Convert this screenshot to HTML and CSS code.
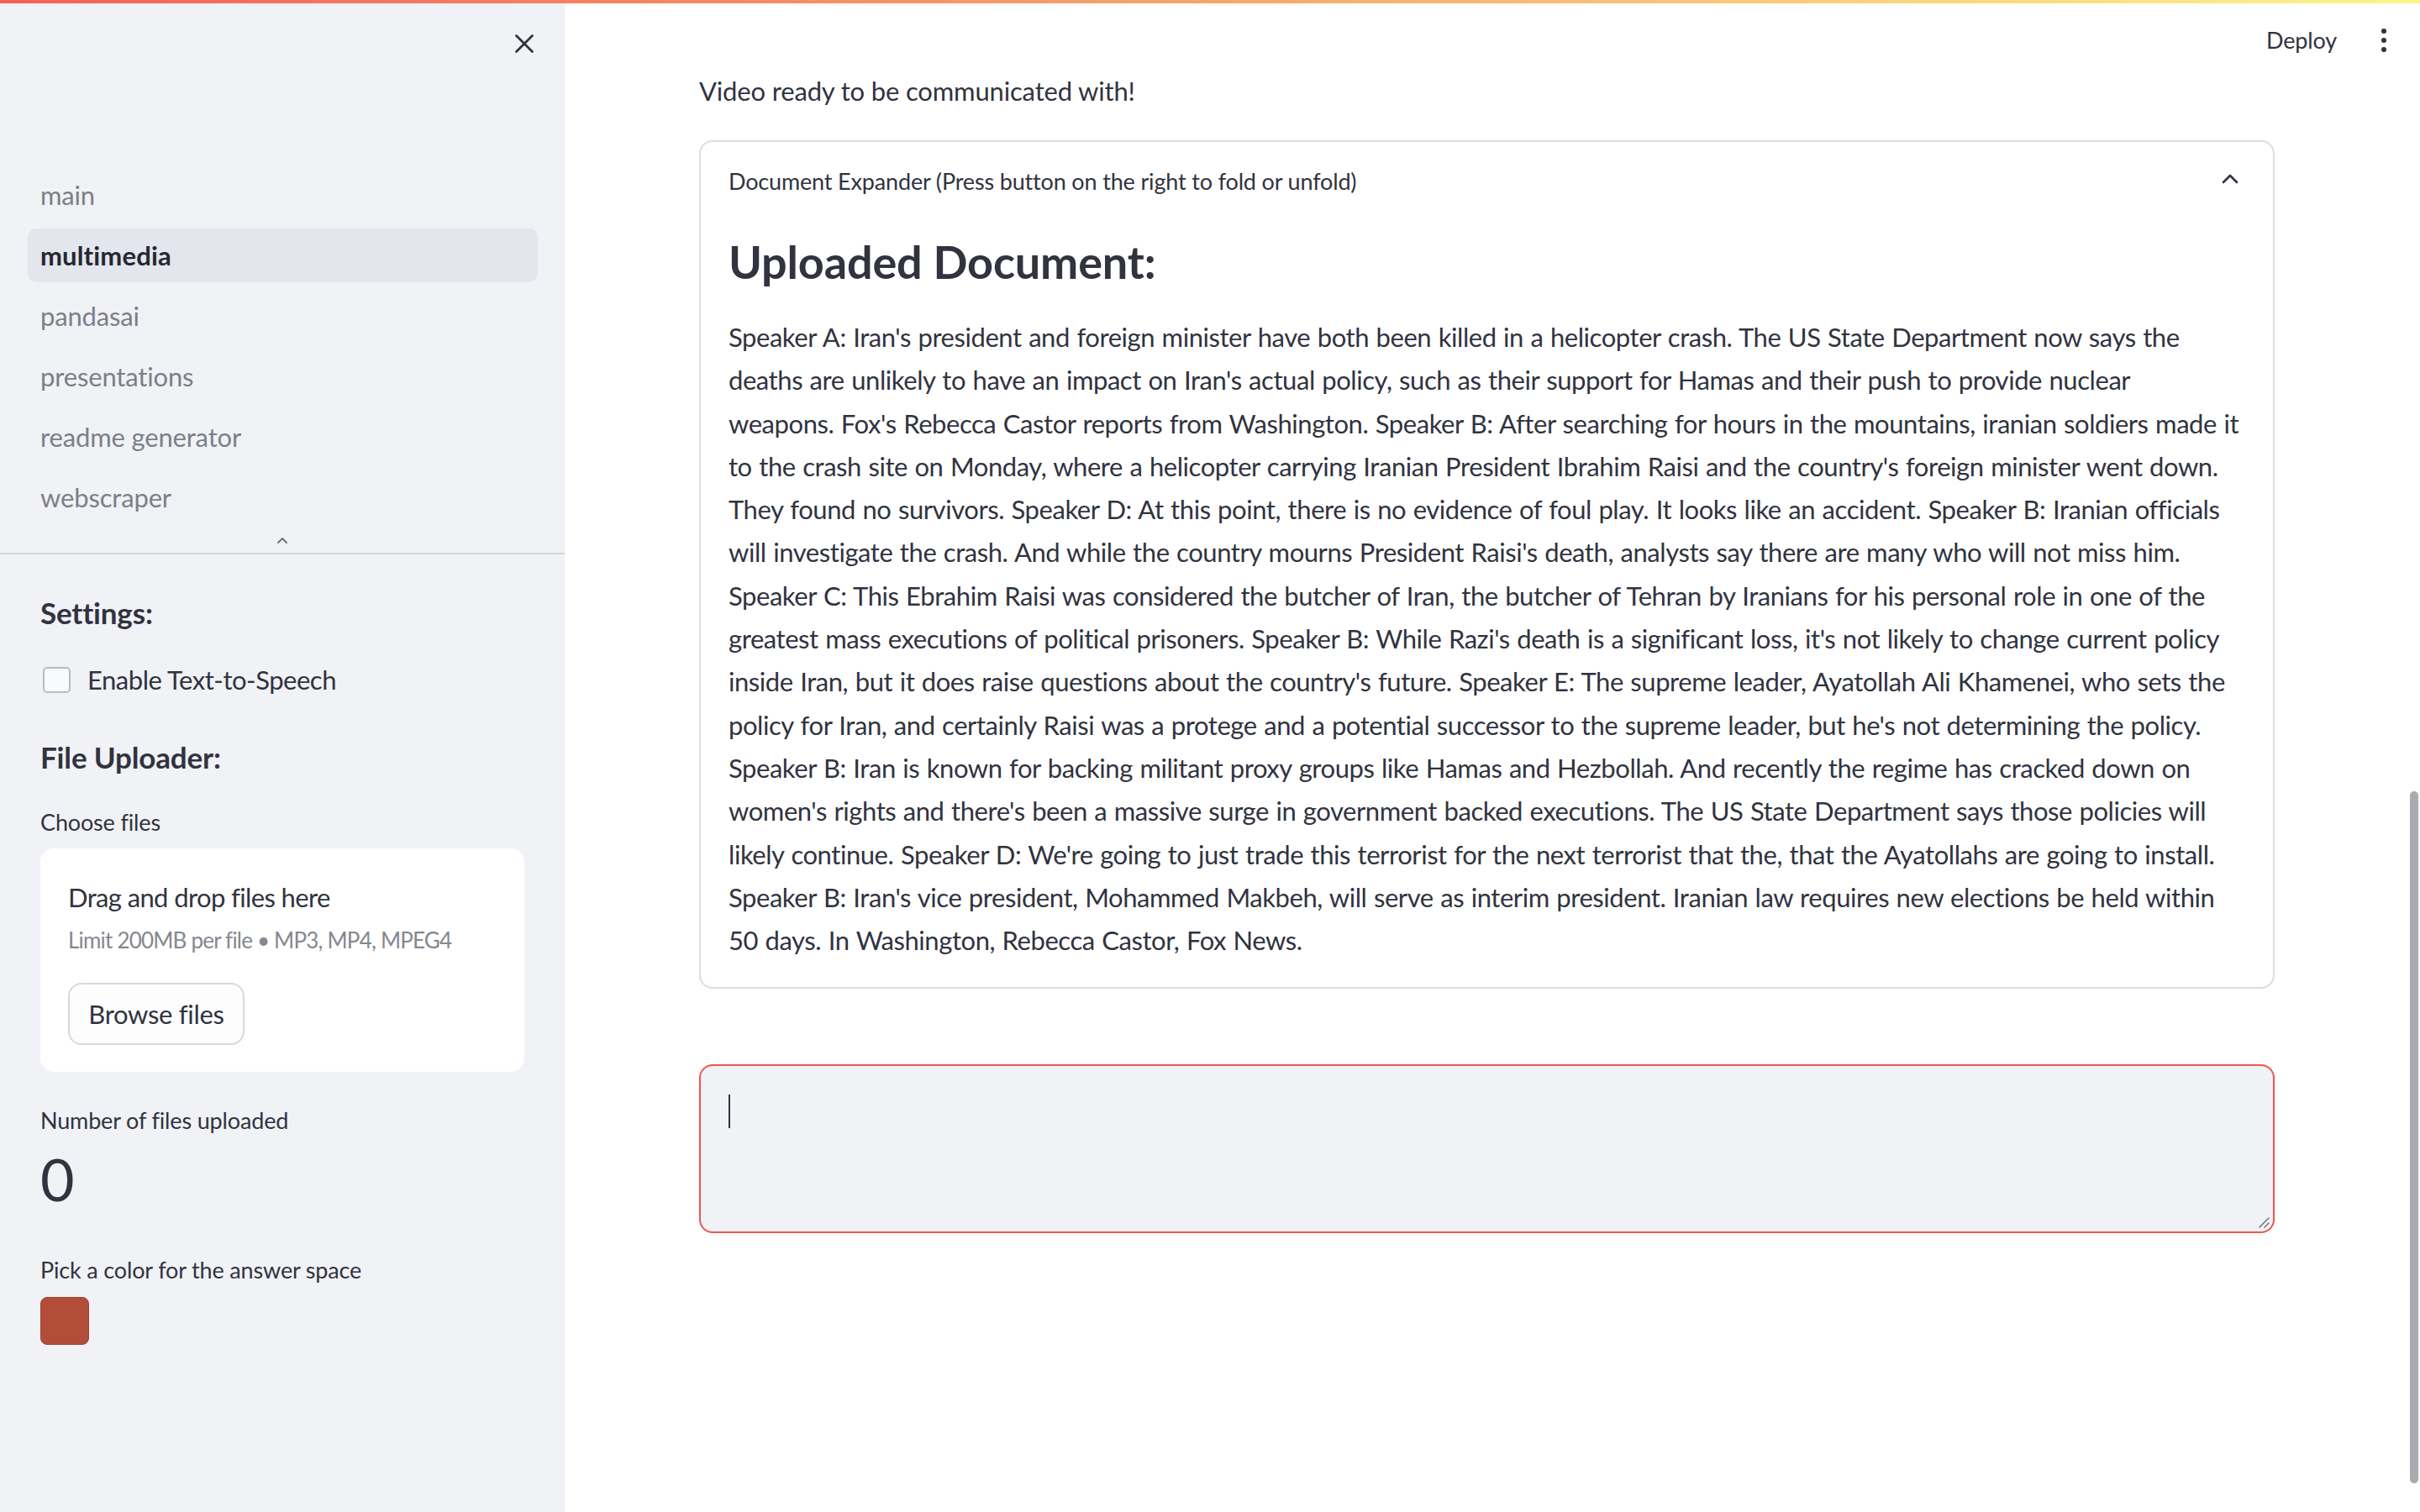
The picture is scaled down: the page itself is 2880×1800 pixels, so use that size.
FILE: index.html
```html
<!DOCTYPE html>
<html lang="en">
<head>
<meta charset="utf-8">
<title>multimedia</title>
<link rel="stylesheet" href="styles.css">
</head>
<body>
<div class="decoration"></div>
<div class="app">
  <aside class="sidebar">
    <div class="sb-header">
      <button class="icon-btn close" aria-label="Close sidebar">
        <svg width="28" height="28" viewBox="0 0 28 28"><path d="M4.5 4.5 L23.5 23.5 M23.5 4.5 L4.5 23.5" stroke="#31333f" stroke-width="2.8" stroke-linecap="round" fill="none"/></svg>
      </button>
    </div>
    <nav class="nav">
      <a class="nav-item">main</a>
      <a class="nav-item active">multimedia</a>
      <a class="nav-item">pandasai</a>
      <a class="nav-item">presentations</a>
      <a class="nav-item">readme generator</a>
      <a class="nav-item">webscraper</a>
    </nav>
    <div class="nav-toggle">
      <svg width="16" height="10" viewBox="0 0 16 10"><path d="M3 8 L8 3 L13 8" stroke="#6b6d76" stroke-width="1.8" fill="none" stroke-linecap="round" stroke-linejoin="round"/></svg>
    </div>
    <div class="sb-divider"></div>
    <div class="sb-content">
      <h3 class="sb-heading settings">Settings:</h3>
      <label class="checkbox-row">
        <span class="checkbox"></span>
        <span class="checkbox-label">Enable Text-to-Speech</span>
      </label>
      <h3 class="sb-heading uploader">File Uploader:</h3>
      <div class="widget-label choose">Choose files</div>
      <div class="dropzone">
        <div class="dz-title">Drag and drop files here</div>
        <div class="dz-limit">Limit 200MB per file • MP3, MP4, MPEG4</div>
        <button class="browse">Browse files</button>
      </div>
      <div class="widget-label count-label">Number of files uploaded</div>
      <div class="metric">0</div>
      <div class="widget-label color-label">Pick a color for the answer space</div>
      <div class="swatch"></div>
    </div>
  </aside>
  <main class="main">
    <header class="topbar">
      <span class="deploy">Deploy</span>
      <span class="kebab"><i></i><i></i><i></i></span>
    </header>
    <div class="content">
      <p class="status">Video ready to be communicated with!</p>
      <section class="expander">
        <div class="exp-header">
          <span class="exp-title">Document Expander (Press button on the right to fold or unfold)</span>
          <svg class="exp-chevron" width="22" height="14" viewBox="0 0 22 14"><path d="M3 11 L11 3 L19 11" stroke="#31333f" stroke-width="2.6" fill="none" stroke-linecap="round" stroke-linejoin="round"/></svg>
        </div>
        <div class="exp-body">
          <h2 class="doc-heading">Uploaded Document:</h2>
          <p class="doc-text">Speaker A: Iran's president and foreign minister have both been killed in a helicopter crash. The US State Department now says the<br>deaths are unlikely to have an impact on Iran's actual policy, such as their support for Hamas and their push to provide nuclear<br>weapons. Fox's Rebecca Castor reports from Washington. Speaker B: After searching for hours in the mountains, iranian soldiers made it<br>to the crash site on Monday, where a helicopter carrying Iranian President Ibrahim Raisi and the country's foreign minister went down.<br>They found no survivors. Speaker D: At this point, there is no evidence of foul play. It looks like an accident. Speaker B: Iranian officials<br>will investigate the crash. And while the country mourns President Raisi's death, analysts say there are many who will not miss him.<br>Speaker C: This Ebrahim Raisi was considered the butcher of Iran, the butcher of Tehran by Iranians for his personal role in one of the<br>greatest mass executions of political prisoners. Speaker B: While Razi's death is a significant loss, it's not likely to change current policy<br>inside Iran, but it does raise questions about the country's future. Speaker E: The supreme leader, Ayatollah Ali Khamenei, who sets the<br>policy for Iran, and certainly Raisi was a protege and a potential successor to the supreme leader, but he's not determining the policy.<br>Speaker B: Iran is known for backing militant proxy groups like Hamas and Hezbollah. And recently the regime has cracked down on<br>women's rights and there's been a massive surge in government backed executions. The US State Department says those policies will<br>likely continue. Speaker D: We're going to just trade this terrorist for the next terrorist that the, that the Ayatollahs are going to install.<br>Speaker B: Iran's vice president, Mohammed Makbeh, will serve as interim president. Iranian law requires new elections be held within<br>50 days. In Washington, Rebecca Castor, Fox News.</p>
        </div>
      </section>
      <div class="answer">
        <span class="caret"></span>
        <svg class="resize" width="16" height="16" viewBox="0 0 16 16"><path d="M14 3 L3 14 M14 9 L9 14" stroke="#6a6a6a" stroke-width="1.4" stroke-linecap="round"/></svg>
      </div>
    </div>
    <div class="scrollbar"></div>
  </main>
</div>
</body>
</html>
```
FILE: styles.css
```css
* { box-sizing: border-box; }
html, body { margin: 0; padding: 0; }
body {
  width: 2880px;
  height: 1800px;
  overflow: hidden;
  font-family: Lato, "Noto Sans", sans-serif;
  letter-spacing: -0.01em;
  color: #31333f;
  background: #ffffff;
}
.decoration {
  position: absolute;
  top: 0; left: 0; right: 0;
  height: 4px;
  background: linear-gradient(90deg, #f4605a 0%, #f5a66c 50%, #fdf58a 100%);
  z-index: 5;
}
.app { display: flex; height: 1800px; }

/* Sidebar */
.sidebar {
  width: 672px;
  flex: 0 0 672px;
  background: #f0f2f6;
  display: flex;
  flex-direction: column;
}
.sb-header {
  height: 200px;
  display: flex;
  justify-content: flex-end;
  align-items: flex-start;
  padding: 38px 34px 0 0;
}
.icon-btn {
  border: 0; background: transparent; padding: 0;
  width: 28px; height: 28px; display: flex;
}
.nav {
  display: flex;
  flex-direction: column;
  gap: 8px;
  padding: 0 32px 0 33px;
}
.nav-item {
  height: 64px;
  display: flex;
  align-items: center;
  padding-left: 15px;
  border-radius: 10px;
  font-size: 31px;
  color: #7d7f88;
}
.nav-item.active {
  background: #e3e6ed;
  color: #262730;
  font-weight: 700;
  letter-spacing: 0.005em;
}
.nav-toggle {
  height: 34px;
  display: flex;
  justify-content: center;
  align-items: center;
  padding-top: 4px;
}
.sb-divider { height: 2px; background: #d3d5da; }
.sb-content {
  display: flex;
  flex-direction: column;
  align-items: flex-start;
  padding: 0 48px 0 48px;
}
.sb-heading {
  margin: 0;
  height: 40px;
  line-height: 40px;
  font-size: 35px;
  font-weight: 700;
  color: #31333f;
}
.settings { margin-top: 49px; }
.uploader { margin-top: 52px; }
.checkbox-row {
  margin-top: 40px;
  height: 40px;
  display: flex;
  align-items: center;
  gap: 20px;
}
.checkbox {
  width: 33px; height: 31px;
  margin-left: 3px;
  border: 2px solid #b9bbc2;
  border-radius: 5px;
  background: #f9fafb;
}
.checkbox-label { font-size: 31px; letter-spacing: -0.015em; }
.widget-label {
  height: 34px;
  line-height: 34px;
  font-size: 27px;
  color: #31333f;
}
.choose { margin-top: 41px; }
.dropzone {
  margin-top: 14px;
  width: 576px;
  height: 266px;
  background: #ffffff;
  border-radius: 16px;
  padding: 38px 0 0 33px;
  display: flex;
  flex-direction: column;
  align-items: flex-start;
}
.dz-title { height: 40px; line-height: 40px; font-size: 31px; letter-spacing: -0.02em; }
.dz-limit { margin-top: 14px; height: 34px; line-height: 34px; font-size: 26px; letter-spacing: -0.8px; color: #85878f; }
.browse {
  margin-top: 34px;
  width: 210px;
  height: 74px;
  border: 2px solid #d7d8dc;
  border-radius: 16px;
  background: #fdfdfe;
  font-family: inherit;
  letter-spacing: -0.01em;
  font-size: 31px;
  color: #31333f;
  padding: 0;
}
.count-label { margin-top: 41px; }
.metric {
  margin-top: 12px;
  height: 80px;
  line-height: 80px;
  font-size: 70px;
  color: #31333f;
}
.color-label { margin-top: 52px; }
.swatch {
  margin-top: 15px;
  width: 58px;
  height: 57px;
  border-radius: 8px;
  background: #b24d39;
  border: 1px solid #a3432f;
}

/* Main */
.main {
  flex: 1;
  min-width: 0;
  position: relative;
  display: flex;
  flex-direction: column;
}
.topbar {
  height: 88px;
  padding: 28px 33px 0 0;
  display: flex;
  justify-content: flex-end;
  align-items: flex-start;
  gap: 46px;
}
.deploy { height: 40px; line-height: 40px; font-size: 27px; color: #31333f; }
.kebab {
  height: 40px;
  width: 20px;
  display: flex;
  flex-direction: column;
  justify-content: center;
  align-items: center;
  gap: 5px;
}
.kebab i { width: 6px; height: 6px; border-radius: 50%; background: #31333f; display: block; }
.content {
  min-width: 0;
  padding: 0 173px 0 160px;
  display: flex;
  flex-direction: column;
}
.status {
  margin: 0;
  height: 40px;
  line-height: 40px;
  font-size: 31px;
}
.expander {
  min-width: 0;
  margin-top: 39px;
  border: 2px solid #dcdce0;
  border-radius: 16px;
  height: 1010px;
}
.exp-header {
  height: 92px;
  display: flex;
  align-items: center;
  justify-content: space-between;
  padding: 0 40px 0 33px;
}
.exp-title { font-size: 27px; }
.exp-chevron { margin-top: -4px; }
.exp-body { padding: 0 33px 33px 33px; }
.doc-heading {
  margin: 17px 0 0 0;
  height: 68px;
  line-height: 68px;
  font-size: 54px;
  font-weight: 700;
  color: #31333f;
}
.doc-text {
  margin: 30px 0 0 0;
  font-size: 31px;
  line-height: 51.3px;
  letter-spacing: -0.44px;
  word-spacing: 1px;
  white-space: nowrap;
}
.answer {
  position: relative;
  margin-top: 90px;
  height: 201px;
  border: 2px solid #ee5650;
  border-radius: 16px;
  background: #f0f2f6;
  padding: 34px 33px;
}
.caret { display: block; width: 2px; height: 40px; background: #31333f; }
.resize { position: absolute; right: 3px; bottom: 3px; }
.scrollbar {
  position: absolute;
  right: 2px;
  top: 942px;
  width: 10px;
  height: 824px;
  border-radius: 5px;
  background: #a9abb0;
}
```
